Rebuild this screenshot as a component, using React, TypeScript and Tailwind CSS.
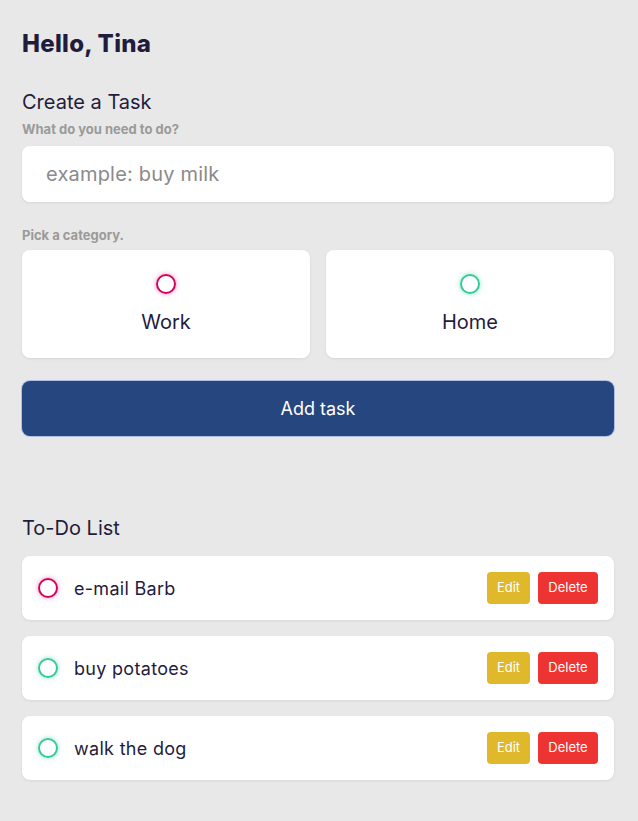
import { useState } from "react";

type Category = "work" | "home";

type Task = {
  id: number;
  title: string;
  category: Category;
};

const initialTasks: Task[] = [
  { id: 1, title: "e-mail Barb", category: "work" },
  { id: 2, title: "buy potatoes", category: "home" },
  { id: 3, title: "walk the dog", category: "home" },
];

function Bubble({ category }: { category: Category }) {
  return (
    <span
      className={
        category === "work"
          ? "block h-5 w-5 shrink-0 rounded-full border-2 border-[#d0055a] shadow-[0_0_5px_rgba(234,64,164,0.6)]"
          : "block h-5 w-5 shrink-0 rounded-full border-2 border-[#35c996] shadow-[0_0_5px_rgba(62,211,156,0.6)]"
      }
    />
  );
}

export default function App() {
  const [tasks] = useState<Task[]>(initialTasks);
  const [text, setText] = useState("");

  return (
    <div className="min-h-[821px] bg-[#e8e8e8] pl-[22px] pr-[24px] pt-[28px] pb-10 font-['Inter',sans-serif] text-[#1f1c3d]">
      <h1 className="text-[24px] font-extrabold leading-8 tracking-[0.3px]">Hello, Tina</h1>

      {/* Create task */}
      <section className="mt-[28px]">
        <h2 className="text-[20px] leading-7">Create a Task</h2>
        <p className="mt-[3px] text-[13px] font-bold leading-5 text-[#9a9a9a]">What do you need to do?</p>
        <input
          value={text}
          onChange={(e) => setText(e.target.value)}
          placeholder="example: buy milk"
          className="mt-[7px] h-14 w-full rounded-lg bg-white px-6 text-[20px] tracking-[0.2px] shadow-[0_1px_3px_rgba(0,0,0,0.08)] outline-none placeholder:text-[#8a8a8a]"
        />

        <p className="mt-[23px] text-[13px] font-bold leading-5 text-[#9a9a9a]">Pick a category.</p>
        <div className="mt-[5px] grid grid-cols-2 gap-4">
          {(["work", "home"] as Category[]).map((c) => (
            <label
              key={c}
              className="flex h-[108px] cursor-pointer flex-col items-center justify-center gap-[16px] rounded-lg bg-white shadow-[0_1px_3px_rgba(0,0,0,0.08)]"
            >
              <Bubble category={c} />
              <span className="text-[20px] leading-6">{c === "work" ? "Work" : "Home"}</span>
            </label>
          ))}
        </div>

        <button className="mt-[23px] h-[55px] w-full rounded-lg bg-[#26467f] text-[18px] text-white shadow-[0_0_0_1px_rgba(120,150,230,0.5)]">
          Add task
        </button>
      </section>

      {/* List */}
      <section className="mt-[78px]">
        <h2 className="text-[20px] leading-7">To-Do List</h2>
        <div className="mt-[14px] flex flex-col gap-4">
          {tasks.map((t) => (
            <div
              key={t.id}
              className="flex h-16 items-center rounded-lg bg-white pl-4 pr-4 shadow-[0_1px_3px_rgba(0,0,0,0.08)]"
            >
              <Bubble category={t.category} />
              <span className="ml-4 flex-1 text-[18px] tracking-[0.3px]">{t.title}</span>
              <button className="h-8 w-[43px] rounded bg-[#e0b82c] text-[13px] text-white">Edit</button>
              <button className="ml-2 h-8 w-[60px] rounded bg-[#ee3333] text-[13px] text-white">Delete</button>
            </div>
          ))}
        </div>
      </section>
    </div>
  );
}
